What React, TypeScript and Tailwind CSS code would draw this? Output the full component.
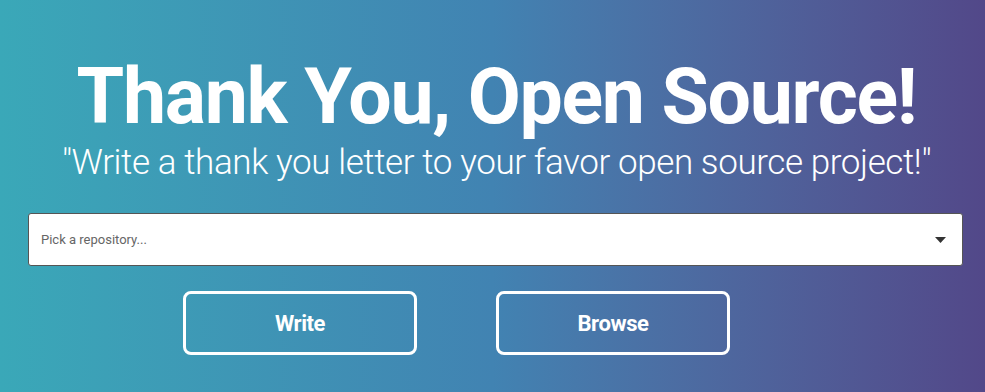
export default function App() {
  return (
    <div className="w-[985px] h-[392px] overflow-hidden bg-gradient-to-r from-[#3aa8b8] via-[#4183b2] to-[#524889] font-['Roboto',sans-serif] text-white">
      <div className="flex flex-col items-center pt-[51px] pl-[8px]">
        <h1 className="text-[77px] leading-[92px] font-bold tracking-[-1.3px]">Thank You, Open Source!</h1>
        <p className="text-[35px] leading-[40px] font-light tracking-[-0.4px]">"Write a thank you letter to your favor open source project!"</p>
      </div>

      <div className="pl-[28px] pr-[22px] mt-[30px]">
        <div className="h-[53px] bg-white rounded-[3px] border border-[#555] flex items-center justify-between pl-[12px] pr-[16px]">
          <span className="text-[13px] text-[#666]">Pick a repository...</span>
          <svg width="11" height="6" viewBox="0 0 11 6" className="mt-[1px]">
            <path d="M0 0 H11 L5.5 6 Z" fill="#333" />
          </svg>
        </div>
      </div>

      <div className="flex gap-[79px] pl-[183px] mt-[25px]">
        <button className="w-[234px] h-[64px] border-[3px] border-white rounded-[8px] text-[22px] font-bold tracking-[-0.4px]">Write</button>
        <button className="w-[234px] h-[64px] border-[3px] border-white rounded-[8px] text-[22px] font-bold tracking-[-0.4px]">Browse</button>
      </div>
    </div>
  );
}
